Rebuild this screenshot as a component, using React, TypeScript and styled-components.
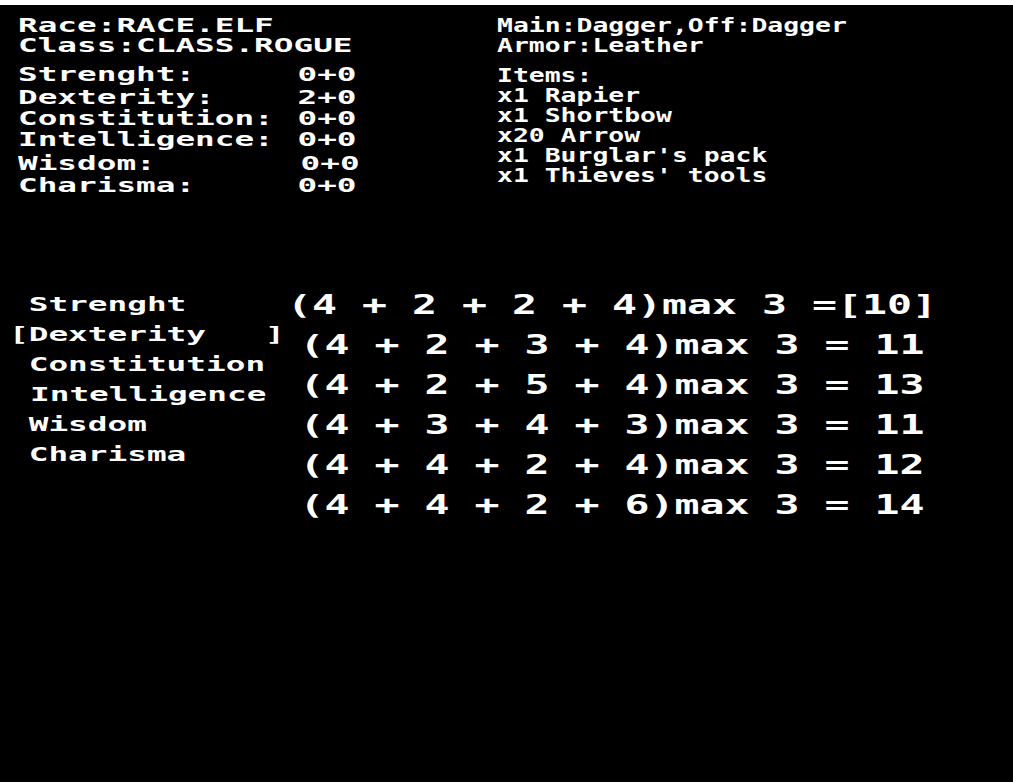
import React from "react";
import styled, { createGlobalStyle } from "styled-components";

const Global = createGlobalStyle`
  html, body { margin: 0; padding: 0; background: #000; }
  body { font-family: "DejaVu Sans Mono", "Liberation Mono", monospace; }
`;

const Screen = styled.div`
  width: 1013px;
  height: 782px;
  box-sizing: border-box;
  border-top: 5px solid #fff;
  background: #000;
  color: #fff;
  overflow: hidden;
  display: flex;
  flex-direction: column;
`;

const TopPanel = styled.section`
  display: grid;
  grid-template-columns: 479px 1fr;
  align-items: start;
  padding: 10px 0 0 18px;
`;

const Column = styled.div<{ $sx: number; $size: number; $lh: number; $origin?: string }>`
  font-weight: bold;
  font-size: ${(p) => p.$size}px;
  line-height: ${(p) => p.$lh}px;
  transform: scaleX(${(p) => p.$sx});
  transform-origin: ${(p) => p.$origin ?? "left top"};
  white-space: pre;
`;

const TextLine = styled.div<{ $top?: number; $h: number; $indent?: number }>`
  height: ${(p) => p.$h}px;
  margin-top: ${(p) => p.$top ?? 0}px;
  padding-left: ${(p) => p.$indent ?? 0}px;
`;

const StatRow = styled.div<{ $top?: number }>`
  display: grid;
  grid-template-columns: 162.5px auto;
  height: 20px;
  margin-top: ${(p) => p.$top ?? 0}px;
`;

const StatValue = styled.span<{ $nudge?: number }>`
  padding-left: ${(p) => p.$nudge ?? 0}px;
`;

const BottomPanel = styled.section`
  display: grid;
  grid-template-columns: 271px 664px;
  margin-top: 90px;
  padding-left: 9px;
`;

const LabelColumn = styled(Column)`
  padding-top: 4px;
`;

const FormulaColumn = styled(Column)`
  text-align: center;
`;

const header = ["Race:RACE.ELF", "Class:CLASS.ROGUE"];

const stats = [
  { label: "Strenght:", value: "0+0", top: 9, nudge: 0 },
  { label: "Dexterity:", value: "2+0", top: 3, nudge: 0 },
  { label: "Constitution:", value: "0+0", top: 1, nudge: 0 },
  { label: "Intelligence:", value: "0+0", top: 1, nudge: 0 },
  { label: "Wisdom:", value: "0+0", top: 4, nudge: 1.8 },
  { label: "Charisma:", value: "0+0", top: 2, nudge: 0 },
];

const gear = [
  { text: "Main:Dagger,Off:Dagger", top: 0 },
  { text: "Armor:Leather", top: 0 },
  { text: "Items:", top: 10 },
  { text: "x1 Rapier", top: 0 },
  { text: "x1 Shortbow", top: 0 },
  { text: "x20 Arrow", top: 0 },
  { text: "x1 Burglar's pack", top: 0 },
  { text: "x1 Thieves' tools", top: 0 },
];

const labels = [
  { text: " Strenght", indent: 0 },
  { text: "[Dexterity   ]", indent: 0 },
  { text: " Constitution", indent: 0 },
  { text: " Intelligence", indent: 0.8 },
  { text: " Wisdom", indent: -1.5 },
  { text: " Charisma", indent: 0 },
];

const formulas = [
  "(4 + 2 + 2 + 4)max 3 =[10]",
  "(4 + 2 + 3 + 4)max 3 = 11",
  "(4 + 2 + 5 + 4)max 3 = 13",
  "(4 + 3 + 4 + 3)max 3 = 11",
  "(4 + 4 + 2 + 4)max 3 = 12",
  "(4 + 4 + 2 + 6)max 3 = 14",
];

export default function App() {
  return (
    <>
      <Global />
      <Screen>
        <TopPanel>
          <Column $sx={1.72} $size={19} $lh={20}>
            {header.map((t) => (
              <TextLine key={t} $h={20}>
                {t}
              </TextLine>
            ))}
            {stats.map((s) => (
              <StatRow key={s.label} $top={s.top}>
                <span>{s.label}</span>
                <StatValue $nudge={s.nudge}>{s.value}</StatValue>
              </StatRow>
            ))}
          </Column>
          <Column $sx={1.39} $size={19} $lh={20}>
            {gear.map((g) => (
              <TextLine key={g.text} $top={g.top} $h={20}>
                {g.text}
              </TextLine>
            ))}
          </Column>
        </TopPanel>
        <BottomPanel>
          <LabelColumn $sx={1.636} $size={20} $lh={30}>
            {labels.map((l) => (
              <TextLine key={l.text} $h={30} $indent={l.indent}>
                {l.text}
              </TextLine>
            ))}
          </LabelColumn>
          <FormulaColumn $sx={1.538} $size={27} $lh={40} $origin="center top">
            {formulas.map((f, i) => (
              <TextLine key={i} $h={40}>
                {f}
              </TextLine>
            ))}
          </FormulaColumn>
        </BottomPanel>
      </Screen>
    </>
  );
}
